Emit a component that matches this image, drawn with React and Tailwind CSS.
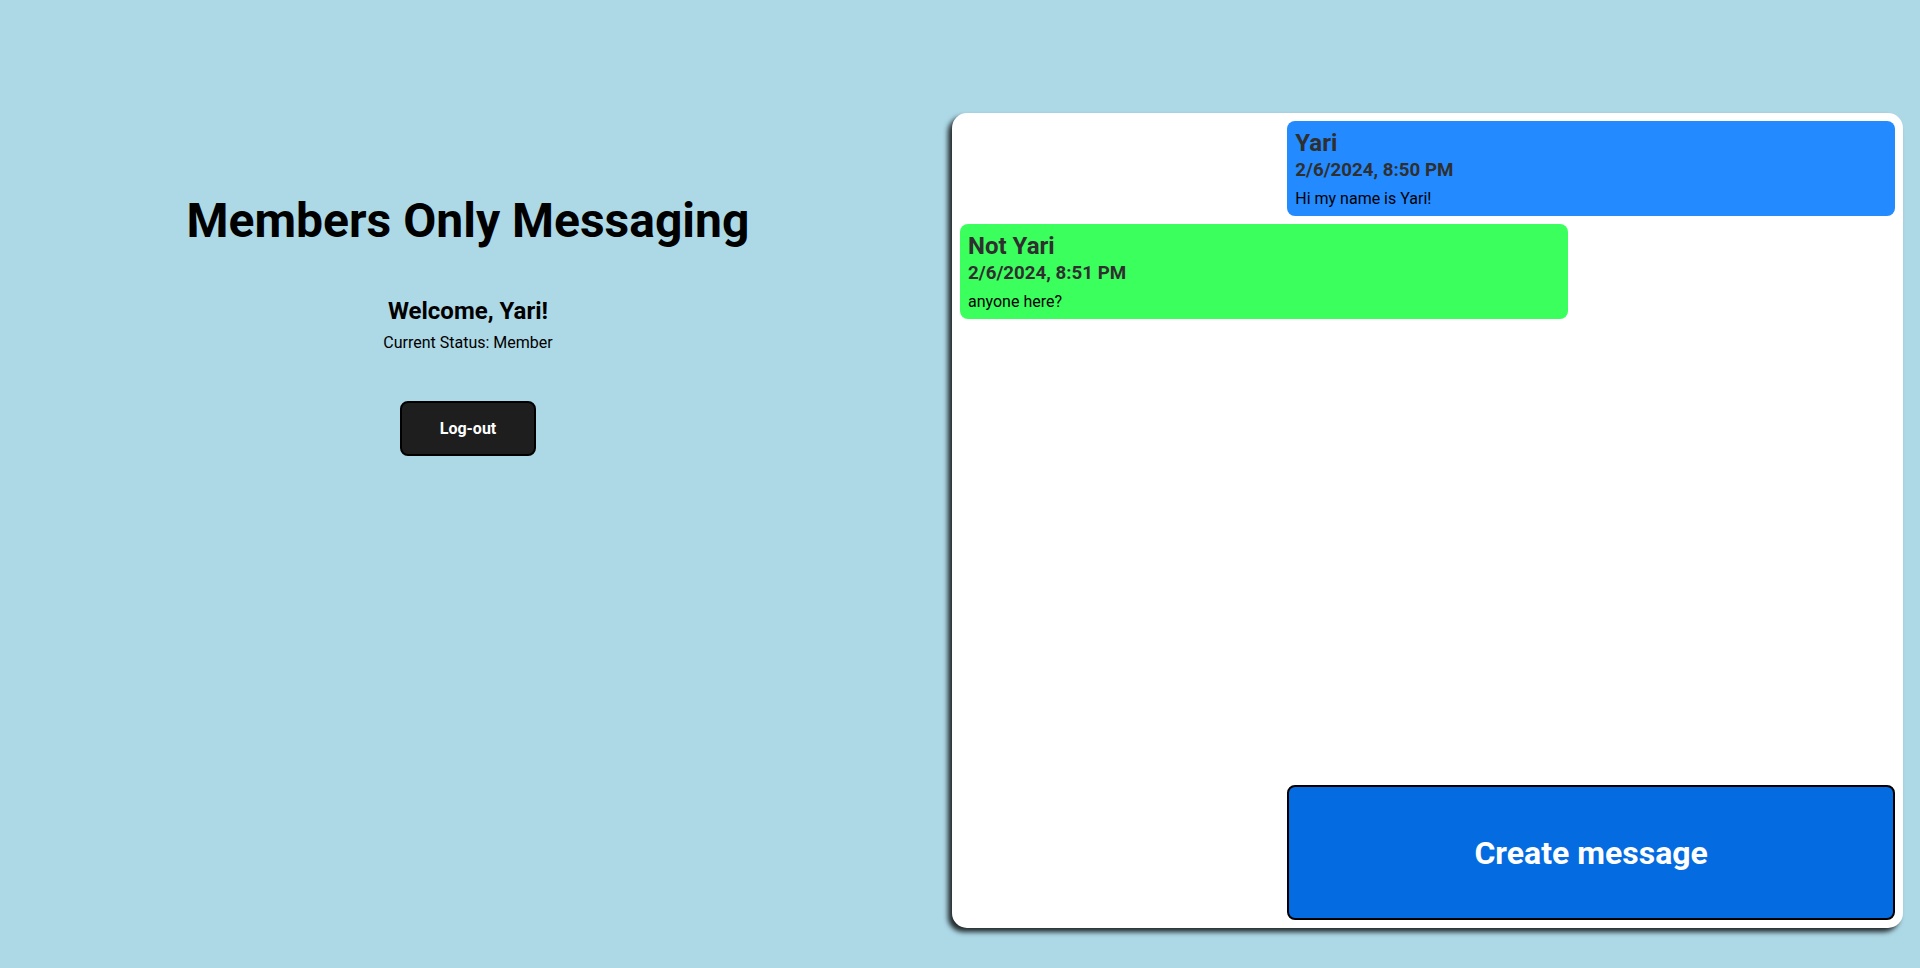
export default function App() {
  const messages = [
    { name: "Yari", date: "2/6/2024, 8:50 PM", text: "Hi my name is Yari!", mine: true },
    { name: "Not Yari", date: "2/6/2024, 8:51 PM", text: "anyone here?", mine: false },
  ];
  return (
    <div className="min-h-screen bg-[#add8e6] font-['Roboto',sans-serif] flex items-start pt-[113px]">
      <div className="w-[936px] flex-none flex flex-col items-center pt-[80px] text-black">
        <h1 className="text-[48px] leading-[56px] font-bold">Members Only Messaging</h1>
        <h2 className="mt-[48px] text-[24px] leading-[28px] font-bold">Welcome, Yari!</h2>
        <p className="mt-[8px] text-[16px] leading-[19px]">Current Status: Member</p>
        <button className="mt-[49px] w-[136px] h-[55px] rounded-lg border-2 border-black bg-[#1e1e1e] text-white text-[16px] font-bold">
          Log-out
        </button>
      </div>
      <div className="ml-[16px] w-[951px] h-[815px] flex-none bg-white rounded-[15px] shadow-[-4px_4px_5px_rgba(0,0,0,0.8)] p-2 flex flex-col gap-2">
        {messages.map((m, i) => (
          <div
            key={i}
            className={
              m.mine
                ? "self-end w-[65%] rounded-lg bg-[#238aff] p-2"
                : "self-start w-[65%] rounded-lg bg-[#3bff5d] p-2"
            }
          >
            <div className="text-[24px] leading-[28px] font-bold text-[#2f2f2f]">{m.name}</div>
            <div className="mt-[2px] text-[18.72px] leading-[22px] font-bold text-[#2f2f2f]">{m.date}</div>
            <div className="mt-[8px] text-[16px] leading-[19px] text-black">{m.text}</div>
          </div>
        ))}
        <div className="flex-1" />
        <button className="self-end w-[65%] h-[135px] rounded-lg border-2 border-black bg-[#056be1] text-white text-[32px] font-bold">
          Create message
        </button>
      </div>
    </div>
  );
}
